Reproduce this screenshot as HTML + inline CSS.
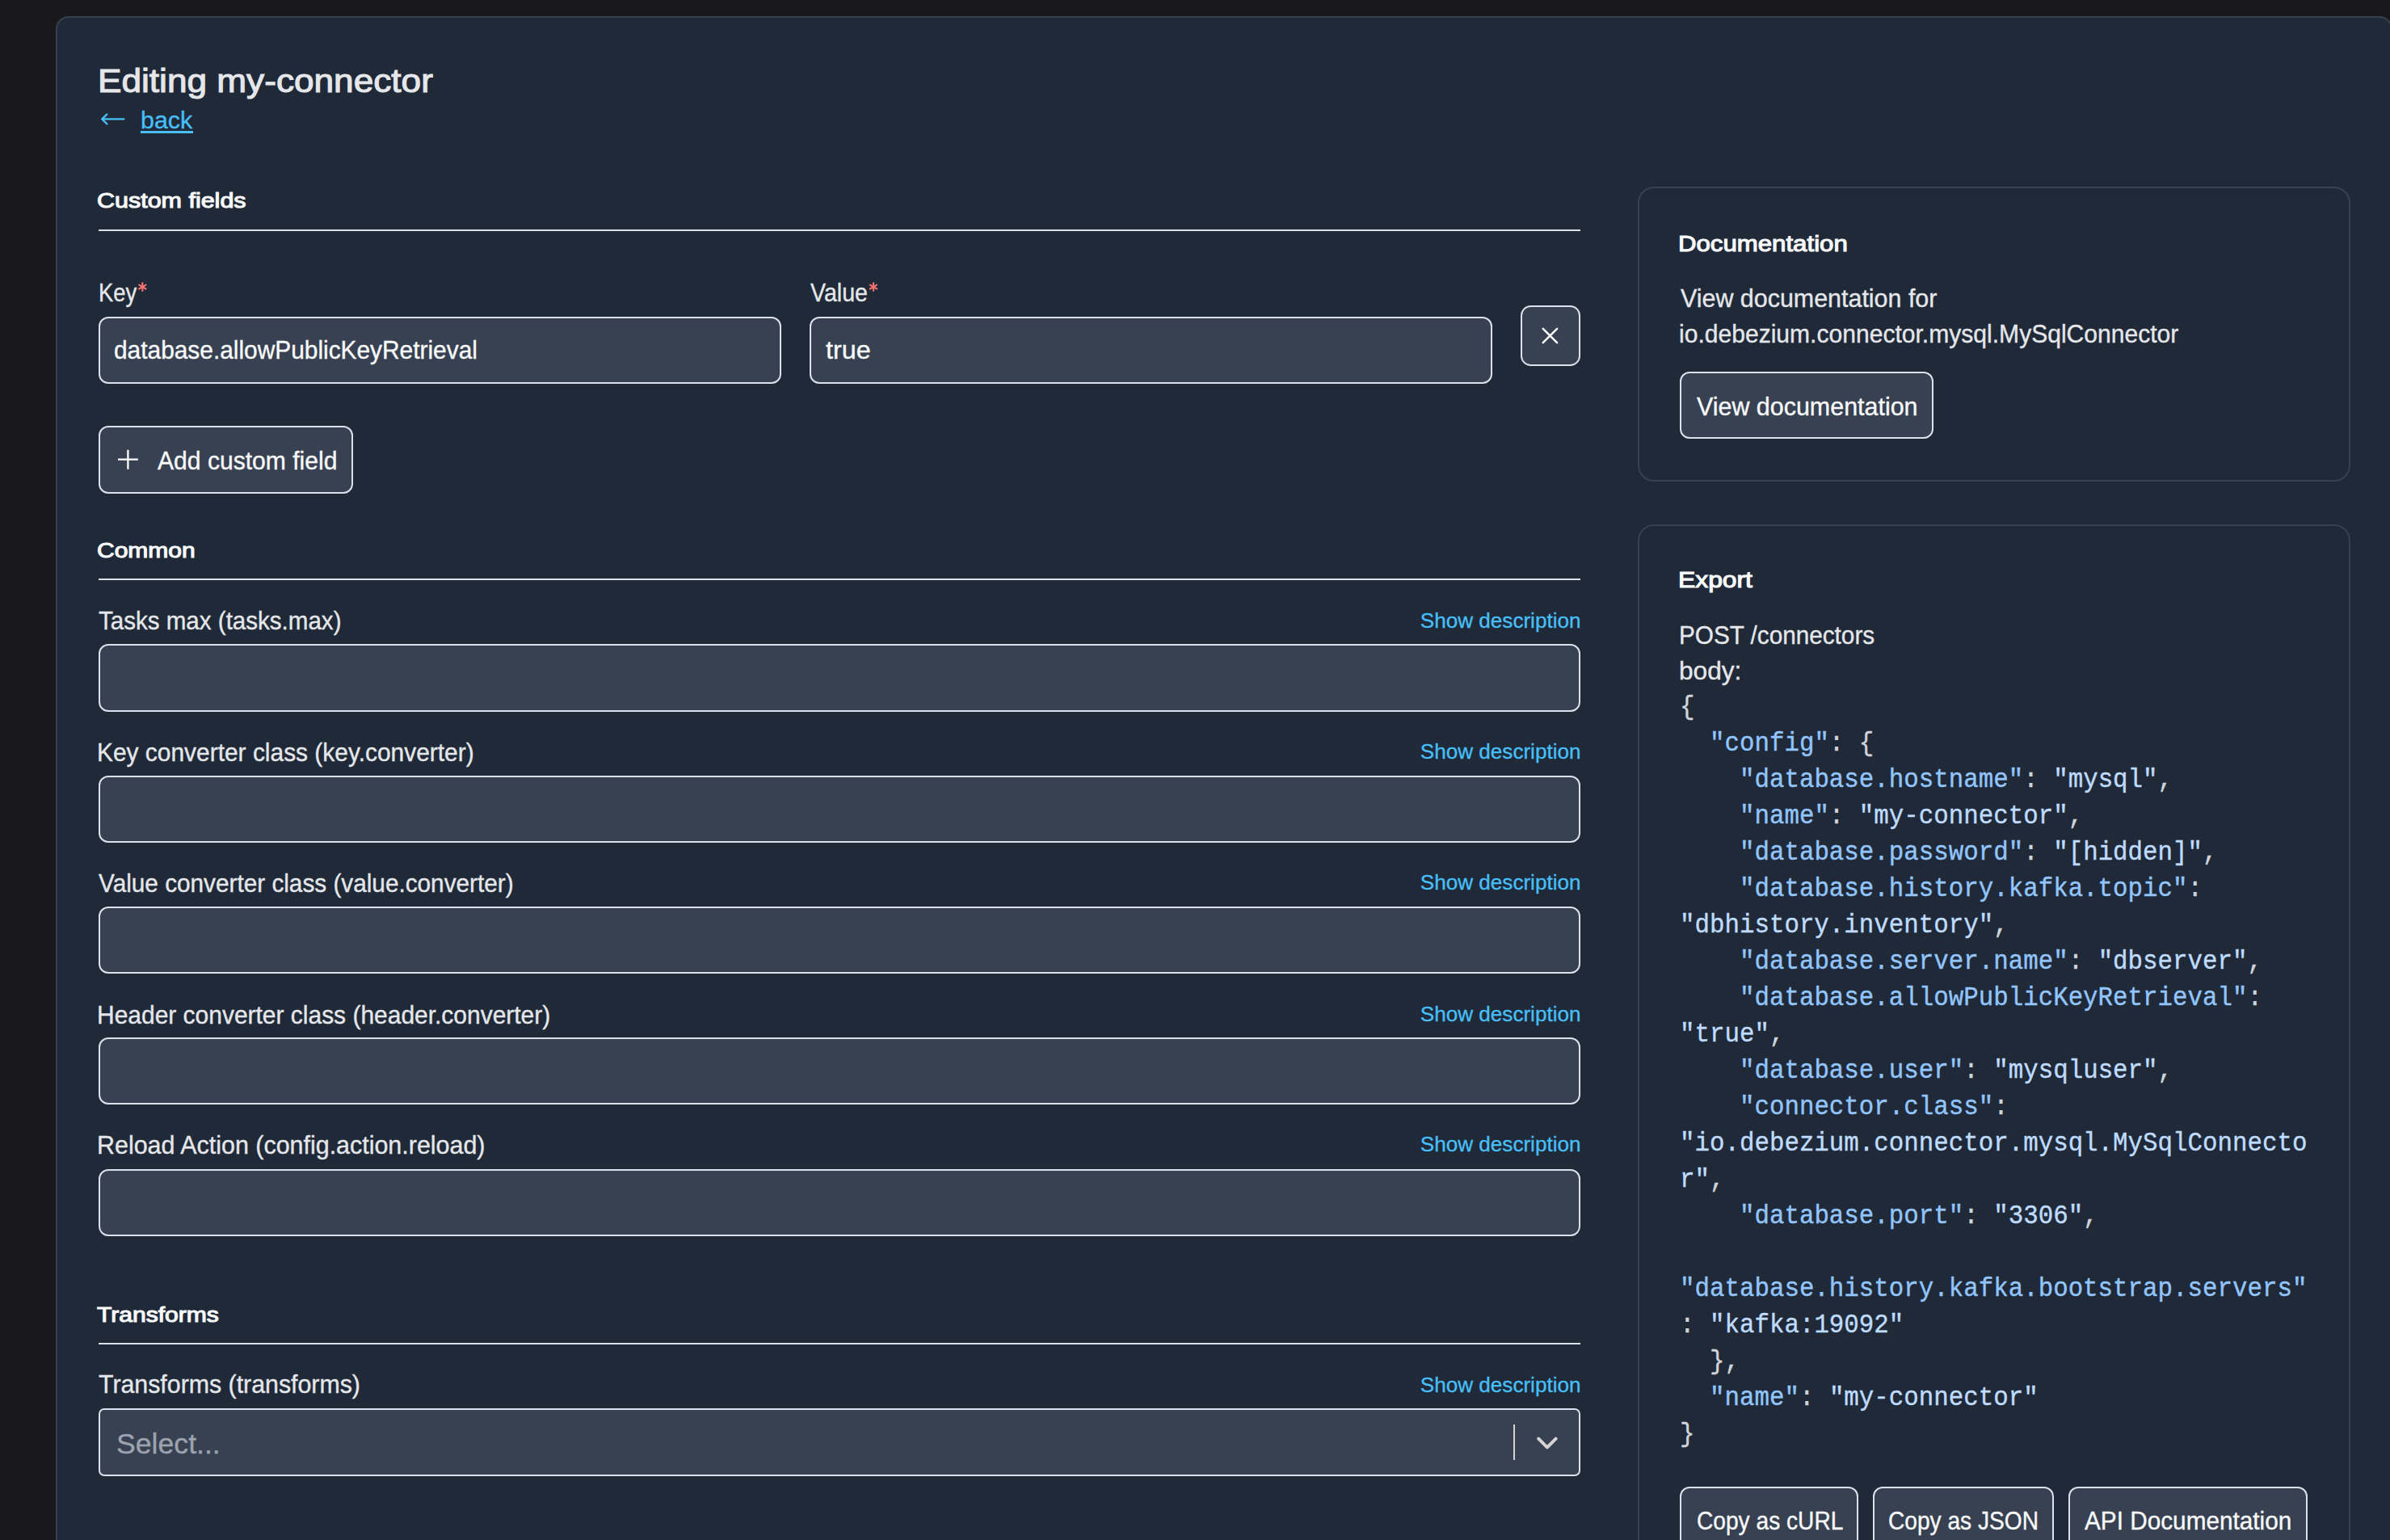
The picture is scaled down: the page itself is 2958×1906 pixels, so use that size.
<!DOCTYPE html><html><head><meta charset="utf-8"><style>
html,body{margin:0;padding:0;width:2958px;height:1906px;overflow:hidden;background:#19191b;}
.b{position:absolute;box-sizing:border-box;}
.t{position:absolute;white-space:pre;font-family:'Liberation Sans', sans-serif;-webkit-text-stroke:0.35px currentColor;}
.m{position:absolute;white-space:pre;font-family:'Liberation Mono', monospace;}
</style></head><body>
<div class="b" style="left:69px;top:20px;width:2892px;height:2080px;background:#1f2937;border:2px solid #374151;border-radius:16px;"></div>
<div class="b" style="left:174px;top:162.1px;width:64.5px;height:2.8px;background:#48bff7;"></div>
<div class="b" style="left:122px;top:284px;width:1834px;height:2px;background:#dae1ed;"></div>
<div class="b" style="left:122px;top:392px;width:845px;height:83px;background:#374151;border:2px solid #dae1ed;border-radius:12px;"></div>
<div class="b" style="left:1001.8px;top:392px;width:845.2px;height:83px;background:#374151;border:2px solid #dae1ed;border-radius:12px;"></div>
<div class="b" style="left:1882px;top:378px;width:74px;height:74.5px;background:#374151;border:2px solid #dae1ed;border-radius:12.5px;"></div>
<div class="b" style="left:122px;top:527px;width:314.5px;height:84px;background:#374151;border:2px solid #dae1ed;border-radius:12px;"></div>
<div class="b" style="left:122px;top:716px;width:1834px;height:2px;background:#dae1ed;"></div>
<div class="b" style="left:122px;top:797px;width:1834px;height:84px;background:#374151;border:2px solid #dae1ed;border-radius:12px;"></div>
<div class="b" style="left:122px;top:960px;width:1834px;height:83px;background:#374151;border:2px solid #dae1ed;border-radius:12px;"></div>
<div class="b" style="left:122px;top:1122px;width:1834px;height:83px;background:#374151;border:2px solid #dae1ed;border-radius:12px;"></div>
<div class="b" style="left:122px;top:1284px;width:1834px;height:83px;background:#374151;border:2px solid #dae1ed;border-radius:12px;"></div>
<div class="b" style="left:122px;top:1447px;width:1834px;height:83px;background:#374151;border:2px solid #dae1ed;border-radius:12px;"></div>
<div class="b" style="left:122px;top:1662px;width:1834px;height:2px;background:#dae1ed;"></div>
<div class="b" style="left:122px;top:1743px;width:1834px;height:84px;background:#374151;border:2px solid #dae1ed;border-radius:7px;"></div>
<div class="b" style="left:1873px;top:1763px;width:2px;height:44px;background:#d6d3d1;"></div>
<div class="b" style="left:2027px;top:231px;width:882px;height:365px;border:2px solid #374151;border-radius:20px;"></div>
<div class="b" style="left:2079px;top:460px;width:314px;height:83px;background:#374151;border:2px solid #dae1ed;border-radius:12px;"></div>
<div class="b" style="left:2027px;top:649px;width:882px;height:1451px;border:2px solid #374151;border-radius:20px;"></div>
<div class="b" style="left:2079px;top:1840px;width:221px;height:83px;background:#374151;border:2px solid #dae1ed;border-radius:12px;"></div>
<div class="b" style="left:2318px;top:1840px;width:224px;height:83px;background:#374151;border:2px solid #dae1ed;border-radius:12px;"></div>
<div class="b" style="left:2560px;top:1840px;width:296px;height:83px;background:#374151;border:2px solid #dae1ed;border-radius:12px;"></div>
<div class="t" id="x0" style="top:79.16px;font-size:41.5px;line-height:41.5px;color:#e5e7eb;transform:scaleX(1.0642);transform-origin:0 0;left:120.74px;-webkit-text-stroke:1.1px #e5e7eb;">Editing my-connector</div>
<div class="t" id="x1" style="top:134.4px;font-size:30px;line-height:30px;color:#48bff7;transform:scaleX(1.0131);transform-origin:0 0;left:173.87px;">back</div>
<div class="t" id="x2" style="top:235.26px;font-size:26.5px;line-height:26.5px;color:#f9fafb;transform:scaleX(1.1497);transform-origin:0 0;left:119.7px;-webkit-text-stroke:1.1px #f9fafb;">Custom fields</div>
<div class="t" id="x3" style="top:347.18px;font-size:30.5px;line-height:30.5px;color:#e5e7eb;transform:scaleX(0.9000);transform-origin:0 0;left:121.9px;">Key</div>
<div class="t" id="x4" style="top:347.18px;font-size:30.5px;line-height:30.5px;color:#e5e7eb;transform:scaleX(0.9373);transform-origin:0 0;left:1002.7px;">Value</div>
<div class="t" id="x5" style="top:418.18px;font-size:30.5px;line-height:30.5px;color:#f9fafb;transform:scaleX(0.9792);transform-origin:0 0;left:141.02px;">database.allowPublicKeyRetrieval</div>
<div class="t" id="x6" style="top:418.18px;font-size:30.5px;line-height:30.5px;color:#f9fafb;transform:scaleX(1.0588);transform-origin:0 0;left:1021.9px;">true</div>
<div class="t" id="x7" style="top:555.18px;font-size:30.5px;line-height:30.5px;color:#f9fafb;transform:scaleX(0.9866);transform-origin:0 0;left:195px;">Add custom field</div>
<div class="t" id="x8" style="top:667.76px;font-size:26.5px;line-height:26.5px;color:#f9fafb;transform:scaleX(1.1320);transform-origin:0 0;left:119.74px;-webkit-text-stroke:1.1px #f9fafb;">Common</div>
<div class="t" id="x9" style="top:752.98px;font-size:30.5px;line-height:30.5px;color:#e5e7eb;transform:scaleX(0.9689);transform-origin:0 0;left:122px;">Tasks max (tasks.max)</div>
<div class="t" id="x10" style="top:754.58px;font-size:26.6px;line-height:26.6px;color:#48bff7;transform:scaleX(0.9815);transform-origin:100% 0;right:1001.5px;">Show description</div>
<div class="t" id="x11" style="top:915.78px;font-size:30.5px;line-height:30.5px;color:#e5e7eb;transform:scaleX(0.9809);transform-origin:0 0;left:120.04px;">Key converter class (key.converter)</div>
<div class="t" id="x12" style="top:917.38px;font-size:26.6px;line-height:26.6px;color:#48bff7;transform:scaleX(0.9815);transform-origin:100% 0;right:1001.5px;">Show description</div>
<div class="t" id="x13" style="top:1077.68px;font-size:30.5px;line-height:30.5px;color:#e5e7eb;transform:scaleX(0.9752);transform-origin:0 0;left:122px;">Value converter class (value.converter)</div>
<div class="t" id="x14" style="top:1079.28px;font-size:26.6px;line-height:26.6px;color:#48bff7;transform:scaleX(0.9815);transform-origin:100% 0;right:1001.5px;">Show description</div>
<div class="t" id="x15" style="top:1240.58px;font-size:30.5px;line-height:30.5px;color:#e5e7eb;transform:scaleX(0.9824);transform-origin:0 0;left:120.04px;">Header converter class (header.converter)</div>
<div class="t" id="x16" style="top:1242.18px;font-size:26.6px;line-height:26.6px;color:#48bff7;transform:scaleX(0.9815);transform-origin:100% 0;right:1001.5px;">Show description</div>
<div class="t" id="x17" style="top:1401.58px;font-size:30.5px;line-height:30.5px;color:#e5e7eb;transform:scaleX(0.9979);transform-origin:0 0;left:120px;">Reload Action (config.action.reload)</div>
<div class="t" id="x18" style="top:1403.18px;font-size:26.6px;line-height:26.6px;color:#48bff7;transform:scaleX(0.9815);transform-origin:100% 0;right:1001.5px;">Show description</div>
<div class="t" id="x19" style="top:1614.16px;font-size:26.5px;line-height:26.5px;color:#f9fafb;transform:scaleX(1.1346);transform-origin:0 0;left:119.73px;-webkit-text-stroke:1.1px #f9fafb;">Transforms</div>
<div class="t" id="x20" style="top:1698.18px;font-size:30.5px;line-height:30.5px;color:#e5e7eb;transform:scaleX(0.9938);transform-origin:0 0;left:122px;">Transforms (transforms)</div>
<div class="t" id="x21" style="top:1700.68px;font-size:26.6px;line-height:26.6px;color:#48bff7;transform:scaleX(0.9815);transform-origin:100% 0;right:1001.5px;">Show description</div>
<div class="t" id="x22" style="top:1769.17px;font-size:35px;line-height:35px;color:#9ca3af;transform:scaleX(1.0180);transform-origin:0 0;left:143.96px;">Select...</div>
<div class="t" id="x23" style="top:287.69px;font-size:28px;line-height:28px;color:#f9fafb;transform:scaleX(1.1137);transform-origin:0 0;left:2076.66px;-webkit-text-stroke:1.1px #f9fafb;">Documentation</div>
<div class="t" id="x24" style="top:353.63px;font-size:31.5px;line-height:31.5px;color:#e5e7eb;transform:scaleX(0.9659);transform-origin:0 0;left:2080px;">View documentation for</div>
<div class="t" id="x25" style="top:397.73px;font-size:31.5px;line-height:31.5px;color:#e5e7eb;transform:scaleX(0.9545);transform-origin:0 0;left:2078.09px;">io.debezium.connector.mysql.MySqlConnector</div>
<div class="t" id="x26" style="top:487.93px;font-size:31.5px;line-height:31.5px;color:#f9fafb;transform:scaleX(0.9662);transform-origin:0 0;left:2100px;">View documentation</div>
<div class="t" id="x27" style="top:704.29px;font-size:28px;line-height:28px;color:#f9fafb;transform:scaleX(1.1364);transform-origin:0 0;left:2076.59px;-webkit-text-stroke:1.1px #f9fafb;">Export</div>
<div class="t" id="x28" style="top:770.83px;font-size:31.5px;line-height:31.5px;color:#e5e7eb;transform:scaleX(0.9429);transform-origin:0 0;left:2078.11px;">POST /connectors</div>
<div class="t" id="x29" style="top:814.93px;font-size:31.5px;line-height:31.5px;color:#e5e7eb;transform:scaleX(1.0042);transform-origin:0 0;left:2077.99px;">body:</div>
<div class="m" id="x30" style="top:858.56px;font-size:33.6px;line-height:33.6px;color:#d1d5db;left:2079.2px;transform:scaleX(0.9174);transform-origin:0 0;-webkit-text-stroke:0.4px currentColor;"><span style="color:#d1d5db">{</span></div>
<div class="m" id="x31" style="top:903.56px;font-size:33.6px;line-height:33.6px;color:#d1d5db;left:2079.2px;transform:scaleX(0.9174);transform-origin:0 0;-webkit-text-stroke:0.4px currentColor;">  <span style="color:#93c5fd">"config"</span><span style="color:#d1d5db">: {</span></div>
<div class="m" id="x32" style="top:948.56px;font-size:33.6px;line-height:33.6px;color:#d1d5db;left:2079.2px;transform:scaleX(0.9174);transform-origin:0 0;-webkit-text-stroke:0.4px currentColor;">    <span style="color:#93c5fd">"database.hostname"</span><span style="color:#d1d5db">: </span><span style="color:#bfdbfe">"mysql"</span><span style="color:#d1d5db">,</span></div>
<div class="m" id="x33" style="top:993.56px;font-size:33.6px;line-height:33.6px;color:#d1d5db;left:2079.2px;transform:scaleX(0.9174);transform-origin:0 0;-webkit-text-stroke:0.4px currentColor;">    <span style="color:#93c5fd">"name"</span><span style="color:#d1d5db">: </span><span style="color:#bfdbfe">"my-connector"</span><span style="color:#d1d5db">,</span></div>
<div class="m" id="x34" style="top:1038.56px;font-size:33.6px;line-height:33.6px;color:#d1d5db;left:2079.2px;transform:scaleX(0.9174);transform-origin:0 0;-webkit-text-stroke:0.4px currentColor;">    <span style="color:#93c5fd">"database.password"</span><span style="color:#d1d5db">: </span><span style="color:#bfdbfe">"[hidden]"</span><span style="color:#d1d5db">,</span></div>
<div class="m" id="x35" style="top:1083.56px;font-size:33.6px;line-height:33.6px;color:#d1d5db;left:2079.2px;transform:scaleX(0.9174);transform-origin:0 0;-webkit-text-stroke:0.4px currentColor;">    <span style="color:#93c5fd">"database.history.kafka.topic"</span><span style="color:#d1d5db">:</span></div>
<div class="m" id="x36" style="top:1128.56px;font-size:33.6px;line-height:33.6px;color:#d1d5db;left:2079.2px;transform:scaleX(0.9174);transform-origin:0 0;-webkit-text-stroke:0.4px currentColor;"><span style="color:#bfdbfe">"dbhistory.inventory"</span><span style="color:#d1d5db">,</span></div>
<div class="m" id="x37" style="top:1173.56px;font-size:33.6px;line-height:33.6px;color:#d1d5db;left:2079.2px;transform:scaleX(0.9174);transform-origin:0 0;-webkit-text-stroke:0.4px currentColor;">    <span style="color:#93c5fd">"database.server.name"</span><span style="color:#d1d5db">: </span><span style="color:#bfdbfe">"dbserver"</span><span style="color:#d1d5db">,</span></div>
<div class="m" id="x38" style="top:1218.56px;font-size:33.6px;line-height:33.6px;color:#d1d5db;left:2079.2px;transform:scaleX(0.9174);transform-origin:0 0;-webkit-text-stroke:0.4px currentColor;">    <span style="color:#93c5fd">"database.allowPublicKeyRetrieval"</span><span style="color:#d1d5db">:</span></div>
<div class="m" id="x39" style="top:1263.56px;font-size:33.6px;line-height:33.6px;color:#d1d5db;left:2079.2px;transform:scaleX(0.9174);transform-origin:0 0;-webkit-text-stroke:0.4px currentColor;"><span style="color:#bfdbfe">"true"</span><span style="color:#d1d5db">,</span></div>
<div class="m" id="x40" style="top:1308.56px;font-size:33.6px;line-height:33.6px;color:#d1d5db;left:2079.2px;transform:scaleX(0.9174);transform-origin:0 0;-webkit-text-stroke:0.4px currentColor;">    <span style="color:#93c5fd">"database.user"</span><span style="color:#d1d5db">: </span><span style="color:#bfdbfe">"mysqluser"</span><span style="color:#d1d5db">,</span></div>
<div class="m" id="x41" style="top:1353.56px;font-size:33.6px;line-height:33.6px;color:#d1d5db;left:2079.2px;transform:scaleX(0.9174);transform-origin:0 0;-webkit-text-stroke:0.4px currentColor;">    <span style="color:#93c5fd">"connector.class"</span><span style="color:#d1d5db">:</span></div>
<div class="m" id="x42" style="top:1398.56px;font-size:33.6px;line-height:33.6px;color:#d1d5db;left:2079.2px;transform:scaleX(0.9174);transform-origin:0 0;-webkit-text-stroke:0.4px currentColor;"><span style="color:#bfdbfe">"io.debezium.connector.mysql.MySqlConnecto</span></div>
<div class="m" id="x43" style="top:1443.56px;font-size:33.6px;line-height:33.6px;color:#d1d5db;left:2079.2px;transform:scaleX(0.9174);transform-origin:0 0;-webkit-text-stroke:0.4px currentColor;"><span style="color:#bfdbfe">r"</span><span style="color:#d1d5db">,</span></div>
<div class="m" id="x44" style="top:1488.56px;font-size:33.6px;line-height:33.6px;color:#d1d5db;left:2079.2px;transform:scaleX(0.9174);transform-origin:0 0;-webkit-text-stroke:0.4px currentColor;">    <span style="color:#93c5fd">"database.port"</span><span style="color:#d1d5db">: </span><span style="color:#bfdbfe">"3306"</span><span style="color:#d1d5db">,</span></div>
<div class="m" id="x45" style="top:1533.56px;font-size:33.6px;line-height:33.6px;color:#d1d5db;left:2079.2px;transform:scaleX(0.9174);transform-origin:0 0;-webkit-text-stroke:0.4px currentColor;"></div>
<div class="m" id="x46" style="top:1578.56px;font-size:33.6px;line-height:33.6px;color:#d1d5db;left:2079.2px;transform:scaleX(0.9174);transform-origin:0 0;-webkit-text-stroke:0.4px currentColor;"><span style="color:#93c5fd">"database.history.kafka.bootstrap.servers"</span></div>
<div class="m" id="x47" style="top:1623.56px;font-size:33.6px;line-height:33.6px;color:#d1d5db;left:2079.2px;transform:scaleX(0.9174);transform-origin:0 0;-webkit-text-stroke:0.4px currentColor;"><span style="color:#d1d5db">: </span><span style="color:#bfdbfe">"kafka:19092"</span></div>
<div class="m" id="x48" style="top:1668.56px;font-size:33.6px;line-height:33.6px;color:#d1d5db;left:2079.2px;transform:scaleX(0.9174);transform-origin:0 0;-webkit-text-stroke:0.4px currentColor;">  <span style="color:#d1d5db">},</span></div>
<div class="m" id="x49" style="top:1713.56px;font-size:33.6px;line-height:33.6px;color:#d1d5db;left:2079.2px;transform:scaleX(0.9174);transform-origin:0 0;-webkit-text-stroke:0.4px currentColor;">  <span style="color:#93c5fd">"name"</span><span style="color:#d1d5db">: </span><span style="color:#bfdbfe">"my-connector"</span></div>
<div class="m" id="x50" style="top:1758.56px;font-size:33.6px;line-height:33.6px;color:#d1d5db;left:2079.2px;transform:scaleX(0.9174);transform-origin:0 0;-webkit-text-stroke:0.4px currentColor;"><span style="color:#d1d5db">}</span></div>
<div class="t" id="x51" style="top:1866.93px;font-size:31.5px;line-height:31.5px;color:#f9fafb;transform:scaleX(0.8930);transform-origin:0 0;left:2099.61px;">Copy as cURL</div>
<div class="t" id="x52" style="top:1866.93px;font-size:31.5px;line-height:31.5px;color:#f9fafb;transform:scaleX(0.8927);transform-origin:0 0;left:2337.11px;">Copy as JSON</div>
<div class="t" id="x53" style="top:1866.93px;font-size:31.5px;line-height:31.5px;color:#f9fafb;transform:scaleX(0.9444);transform-origin:0 0;left:2580px;">API Documentation</div>
<svg style="position:absolute;left:0px;top:0px;overflow:visible" width="1" height="1" viewBox="0 0 1 1"><g fill="none" stroke="#48bff7" stroke-width="2.2" stroke-linecap="round" stroke-linejoin="round"><path d="M153.4 147.4H126.2M132.4 141.4L126.2 147.4L132.4 153.4"/></g></svg>
<svg style="position:absolute;left:0;top:0;overflow:visible" width="1" height="1"><g stroke="#f87171" stroke-width="2.1" stroke-linecap="round"><line x1="176.30" y1="350.30" x2="176.30" y2="359.90"/><line x1="172.14" y1="352.70" x2="180.46" y2="357.50"/><line x1="172.14" y1="357.50" x2="180.46" y2="352.70"/></g></svg>
<svg style="position:absolute;left:0;top:0;overflow:visible" width="1" height="1"><g stroke="#f87171" stroke-width="2.1" stroke-linecap="round"><line x1="1081.00" y1="350.30" x2="1081.00" y2="359.90"/><line x1="1076.84" y1="352.70" x2="1085.16" y2="357.50"/><line x1="1076.84" y1="357.50" x2="1085.16" y2="352.70"/></g></svg>
<svg style="position:absolute;left:0px;top:0px;overflow:visible" width="1" height="1" viewBox="0 0 1 1"><g fill="none" stroke="#ffffff" stroke-width="2.4" stroke-linecap="round"><path d="M1909.7 406.8L1927.1 424.2M1927.1 406.8L1909.7 424.2"/></g></svg>
<svg style="position:absolute;left:0px;top:0px;overflow:visible" width="1" height="1" viewBox="0 0 1 1"><g fill="none" stroke="#ffffff" stroke-width="2.3"><path d="M146 568.6H170.8M158.4 556.7V580.7"/></g></svg>
<svg style="position:absolute;left:0px;top:0px;overflow:visible" width="1" height="1" viewBox="0 0 1 1"><g fill="none" stroke="#d4d4d4" stroke-width="4" stroke-linecap="round" stroke-linejoin="round"><path d="M1904.2 1780.6L1914.9 1791.4L1925.6 1780.6"/></g></svg>
</body></html>
